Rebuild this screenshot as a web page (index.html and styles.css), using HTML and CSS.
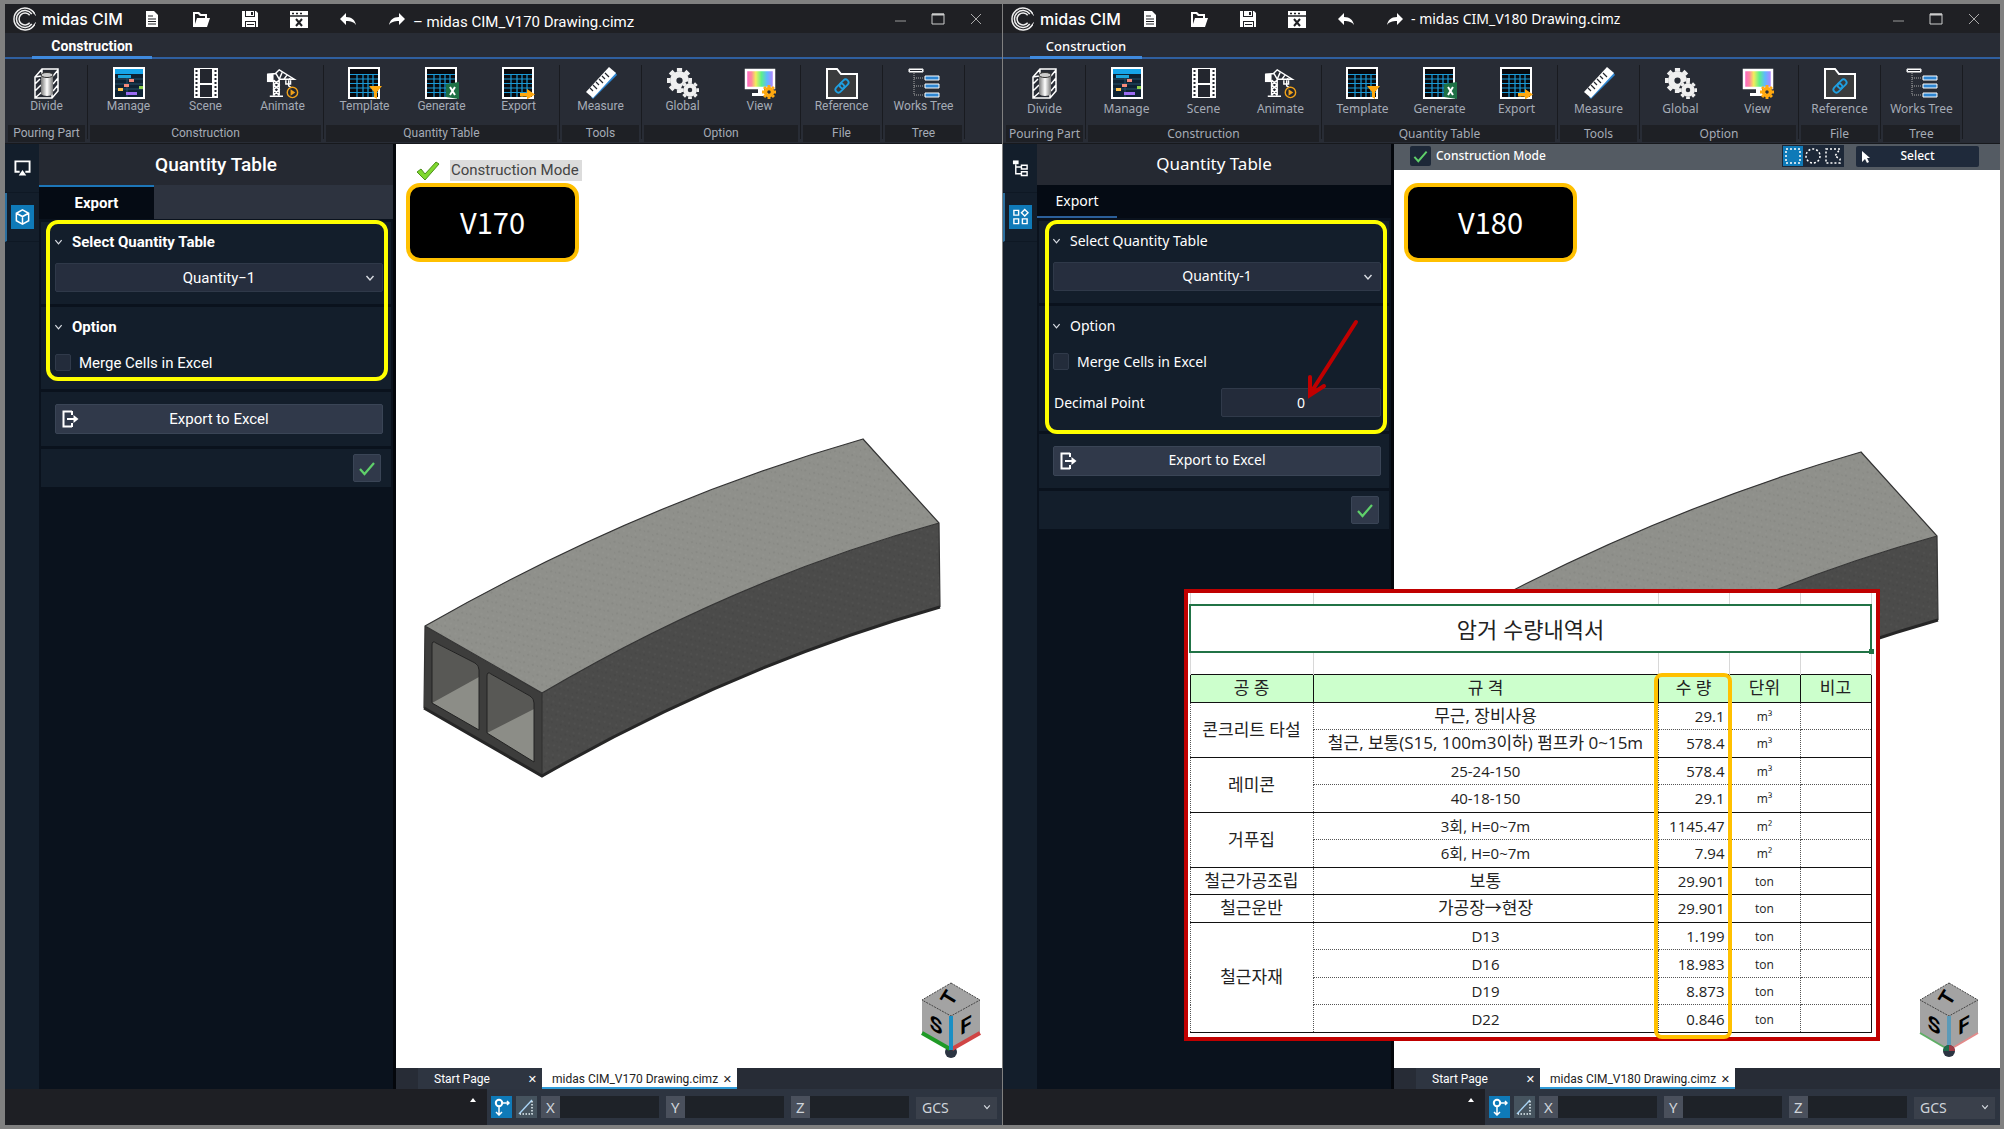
FILE: index.html
```html
<!DOCTYPE html>
<html lang="en">
<head>
  <meta charset="UTF-8" />
  <title>midas CIM V170 / V180</title>
  <meta name="viewport" content="width=device-width, initial-scale=1.0" />
  <link rel="stylesheet" href="styles.css">
</head>
<body>

  <!-- Shared icons -->
  <svg class="sprite" aria-hidden="true">
    <defs>
      <linearGradient id="rainbow">
        <stop offset="0" stop-color="#ff5fd0"/><stop offset=".2" stop-color="#ff8a9a"/><stop offset=".35" stop-color="#f2ee5a"/>
        <stop offset=".55" stop-color="#5cf08a"/><stop offset=".75" stop-color="#5fb8ff"/><stop offset="1" stop-color="#c07bff"/>
      </linearGradient>
      <linearGradient id="pipe">
        <stop offset="0" stop-color="#777"/><stop offset=".5" stop-color="#fff"/><stop offset="1" stop-color="#777"/>
      </linearGradient>
      <pattern id="grain" width="14" height="11" patternUnits="userSpaceOnUse" patternTransform="rotate(-25)">
        <path d="M2 3h2M9 8h2M6 6h1M12 2h1" stroke="#000" stroke-opacity=".09"/>
        <path d="M5 1h2M1 8h2M10 5h2" stroke="#fff" stroke-opacity=".05"/>
      </pattern>
    </defs>

    <symbol id="i-logo" viewBox="0 0 24 24">
      <g fill="none" stroke="#eee">
        <path d="M21.5 6.5A11 11 0 1 0 21.5 17.500" stroke-width="1.500"/>
        <path d="M18.800 7A8.500 8.500 0 1 0 18.800 17" stroke-width="1.500"/>
        <path d="M16.700 8.200A6 6 0 1 0 16.700 15.800" stroke-width="1.500"/>
        <path d="M19 3.500A11 11 0 0 1 22.500 8.500M19 20.500A11 11 0 0 0 22.500 15.500" stroke-width="1"/>
      </g>
    </symbol>
    <symbol id="i-new" viewBox="0 0 18 18">
      <path d="M3 1h8l4 4v12H3z" fill="#fff"/>
      <path d="M5 6h5M5 9h8M5 11.500h8M5 14h8" stroke="#1f2024" stroke-width="1.200"/>
    </symbol>
    <symbol id="i-open" viewBox="0 0 18 18">
      <path d="M1 17V2h6l2 2h6v4h-2V6H8L6 4H3v10l2-6h13l-3 9z" fill="#fff"/>
    </symbol>
    <symbol id="i-save" viewBox="0 0 18 18">
      <path d="M1 1h3v6h10V1h1l2 2v14h-2v-6H4v6H1z" fill="#fff"/>
      <path d="M5 1h8v5H5zM5 12h9v5H5z" fill="#fff"/>
      <path d="M10 2h2v3h-2zM6 14h7v1H6z" fill="#1f2024"/>
    </symbol>
    <symbol id="i-closefile" viewBox="0 0 18 18">
      <path d="M0 1h18v17H0z" fill="#fff"/>
      <path d="M0 6h18" stroke="#1f2024" stroke-width="1.500"/>
      <path d="M2 3.500h2M6 3.500h2M10 3.500h2" stroke="#1f2024" stroke-width="1.500"/>
      <path d="M6 9l6 7M12 9l-6 7" stroke="#1f2024" stroke-width="2"/>
    </symbol>
    <symbol id="i-undo" viewBox="0 0 18 18">
      <path d="M7 3v4c6 0 9 3 10 8-2-3-5-4-10-4v4L1 9z" fill="#fff"/>
    </symbol>
    <symbol id="i-redo" viewBox="0 0 18 18">
      <path d="M11 3v4C5 7 2 10 1 15c2-3 5-4 10-4v4l6-6z" fill="#fff"/>
    </symbol>

    <symbol id="i-divide" viewBox="0 0 32 32">
      <path d="M4 10L11 2h16v22l-6 7H4zM4 10l6-1M4 24l6-6M22 9l5-6M22 24l5-6M22 17l5-6M4 17l5-5M11 2v5M4 31l8-7M21 31V12" fill="none" stroke="#fff" stroke-width="1.500"/>
      <path d="M10 8v19c2 2.500 10 2.500 12 0V8z" fill="url(#pipe)"/>
      <ellipse cx="16" cy="8" rx="6" ry="2.500" fill="#ccc" stroke="#333"/>
    </symbol>
    <symbol id="i-manage" viewBox="0 0 32 32">
      <path d="M1 1h30v30H1z" fill="#0e2233" stroke="#fff" stroke-width="2"/>
      <path d="M2 2h28v5H2z" fill="#16a5ea"/>
      <path d="M2 12h28M2 17h28M2 22h28M14 8v22" stroke="#27506b"/>
      <path d="M5 8h13v3H5z" fill="#1ca4dc"/>
      <path d="M16 12h5v3h-5zM11 17h5v3h-5z" fill="#f58a7a"/>
      <path d="M5 21h5v3H5z" fill="#ffc24d"/><path d="M26 19h4v3h-4z" fill="#8bd14a"/><path d="M13 25h11v3H13z" fill="#9a6af0"/>
    </symbol>
    <symbol id="i-scene" viewBox="0 0 32 32">
      <path d="M4 1h24v30H4z" fill="#fff"/>
      <path d="M10 2h12v14H10zM10 18h12v12H10z" fill="#23262e"/>
      <path d="M6.500 3v28M25.500 3v28" stroke="#23262e" stroke-width="2" stroke-dasharray="2 2"/>
    </symbol>
    <symbol id="i-animate" viewBox="0 0 36 32">
      <path d="M2 7l8-1 4-4 16 10H14v17M8 13v16M4 30h14M14 12L10 5M17 5l-3 7M22 8l-3 4M26 11l-2 1M8 13l6 5-6 5 6 6M14 13l-6 5 6 5-6 6M24 13v6l3 2M21 13v4h5v-4" fill="none" stroke="#fff" stroke-width="1.500"/>
      <path d="M1 6h7v9H1z" fill="#fff"/>
      <circle cx="28" cy="26" r="5.500" fill="#23262e" stroke="#f0a21a" stroke-width="1.500"/><path d="M26 22.500l5 3.500-5 3.500z" fill="#f0a21a"/>
    </symbol>
    <symbol id="i-grid" viewBox="0 0 34 32">
      <path d="M1 1h30v30H1z" fill="#07090d" stroke="#fff" stroke-width="2"/>
      <path d="M2 7.500h28M2 12h28M2 16.500h28M2 21h28M2 25.500h28M9 7v23M15 7v23M20 7v23M25 7v23" stroke="#1b9ad6" stroke-width="1.200"/>
    </symbol>
    <symbol id="i-measure" viewBox="0 0 32 32">
      <path d="M8 32L32 8l-2-3L6 30z" fill="#2e86d2"/>
      <path d="M1 25L24 0l7 6L8 31z" fill="#fff"/>
      <path d="M5 21l3 3M8 18l4 4M11 15l3 3M14 12l4 4M17 9l3 3M20 6l4 4" stroke="#23262e" stroke-width="1.200"/>
    </symbol>
    <symbol id="i-gear" viewBox="-12 -12 24 24">
      <circle r="6" fill="none" stroke="currentColor" stroke-width="6"/>
      <path d="M0-8.500V-12M0 8.500V12M-8.500 0H-12M8.500 0H12M-6-6l-2.500-2.500M6 6l2.500 2.500M6-6l2.500-2.500M-6 6l-2.500 2.500" stroke="currentColor" stroke-width="5"/>
    </symbol>
    <symbol id="i-global" viewBox="0 0 32 32">
      <g color="#efefef">
        <use href="#i-gear" x="0" y="1" width="25" height="25"/>
        <circle cx="23" cy="23" r="9" fill="#282c35"/>
        <use href="#i-gear" x="14" y="14" width="18" height="18"/>
      </g>
    </symbol>
    <symbol id="i-view" viewBox="0 0 32 32">
      <path d="M2 3h28v18H2z" fill="url(#rainbow)" stroke="#fff" stroke-width="2.500"/>
      <path d="M14 22h6v4h4v3H8v-3h6z" fill="#fff"/>
      <g color="#ffa910"><use href="#i-gear" x="18" y="18" width="14" height="14"/></g>
    </symbol>
    <symbol id="i-reference" viewBox="0 0 32 32">
      <path d="M1 31V2h10l4 5h16v24z" fill="#3a3b3c" stroke="#fff" stroke-width="2"/>
      <g fill="none" stroke="#1f9fe0" stroke-width="1.800" transform="rotate(-45 16 19)">
        <rect x="8" y="16" width="10" height="6" rx="3"/><rect x="14" y="16" width="10" height="6" rx="3"/>
      </g>
    </symbol>
    <symbol id="i-tree" viewBox="0 0 32 32">
      <path d="M1 2h14v3H1zM17 9h14v4H17zM17 17h14v4H17zM17 26h14v4H17z" fill="#2e86d2" stroke="#fff"/>
      <path d="M1.500 2.500h13v2h-13z" fill="#23262e" stroke="#fff"/>
      <path d="M6 6v22h11M6 11h11M6 19h11" fill="none" stroke="#aaa" stroke-dasharray="1 1"/>
    </symbol>

    <symbol id="i-chev" viewBox="0 0 10 10"><path d="M1.500 3l3.500 4 3.500-4" fill="none" stroke="#d8dce2" stroke-width="1.400"/></symbol>
    <symbol id="i-check" viewBox="0 0 16 16"><path d="M1 9l4.500 5L15 3" fill="none" stroke="#5fd06a" stroke-width="2.200"/></symbol>
    <symbol id="i-exit" viewBox="0 0 18 18">
      <path d="M11 1.500H2.500v15H11M11 1v4M11 13v4" fill="none" stroke="#fff" stroke-width="2"/>
      <path d="M6 9h8" stroke="#fff" stroke-width="2"/><path d="M12.500 5l5 4-5 4z" fill="#fff"/>
    </symbol>
    <symbol id="i-snap" viewBox="0 0 18 18">
      <circle cx="7" cy="5" r="3.200" fill="none" stroke="#fff" stroke-width="2"/>
      <path d="M7 8v9M11 5h6M15 3l2 2-2 2M4 14l3 3 3-3" fill="none" stroke="#fff" stroke-width="1.500"/>
    </symbol>
    <symbol id="i-angle" viewBox="0 0 18 18">
      <path d="M2 16L15 2" stroke="#a9d4f5" stroke-width="1.400"/><path d="M15 3v13H3" fill="none" stroke="#e6f2f8" stroke-width="1.500" stroke-dasharray="1.500 1.500"/>
    </symbol>

    <symbol id="i-model" viewBox="0 0 560 380">
      <path d="M25 206Q240 83 463 19L539 103Q335 159 142 273z" fill="#8f908b"/>
      <path d="M142 273Q335 159 539 103L540 187Q336 245 142 357z" fill="#4b4b4a"/>
      <path d="M25 206L142 273V357L24 288z" fill="#3d3d3c"/>
      <path d="M32 225q0-5 4-2l39 20q4 2 4 7v60L32 283z" fill="#8c8d87"/>
      <path d="M32 225q0-5 4-2l39 20q4 2 4 7v7L32 283z" fill="#585855"/>
      <path d="M87 256q0-5 4-2l39 22q4 2 4 7v59L87 313z" fill="#8c8d87"/>
      <path d="M87 256q0-5 4-2l39 22q4 2 4 7v6L87 313z" fill="#585855"/>
      <path d="M32 225q0-5 4-2l39 20q4 2 4 7v60L32 283zM87 256q0-5 4-2l39 22q4 2 4 7v59L87 313z" fill="none" stroke="#222"/>
      <path d="M25 206Q240 83 463 19L539 103L540 187Q336 245 142 357V273z" fill="url(#grain)"/>
      <path d="M24 288L25 206Q240 83 463 19L539 103L540 187M25 206L142 273Q335 159 539 103M142 273V357" fill="none" stroke="#333" stroke-width="1.200"/>
      <path d="M24 288L142 356Q336 245 540 187" fill="none" stroke="#262626" stroke-width="3"/>
    </symbol>
    <symbol id="i-cubeface" viewBox="0 0 60 76">
      <path d="M30 1L59 18V51L30 68L1 51V18z" fill="#a3a3a3"/>
      <path d="M30 1L59 18L30 34L1 18z" fill="none" stroke="#444" stroke-dasharray="2 1"/>
    </symbol>
  </svg>

  <div class="desktop">

    <!-- V170 -->
    <main class="win win-v170">
      <header class="titlebar">
        <svg class="logo"><use href="#i-logo"/></svg>
        <span class="brand">midas CIM</span>
        <nav class="quick">
          <button aria-label="New"><svg><use href="#i-new"/></svg></button>
          <button aria-label="Open"><svg><use href="#i-open"/></svg></button>
          <button aria-label="Save"><svg><use href="#i-save"/></svg></button>
          <button aria-label="Close file"><svg><use href="#i-closefile"/></svg></button>
          <button aria-label="Undo"><svg><use href="#i-undo"/></svg></button>
          <button aria-label="Redo"><svg><use href="#i-redo"/></svg></button>
        </nav>
        <span class="doc-title">– midas CIM_V170 Drawing.cimz</span>
        <div class="win-btns">
          <button aria-label="Minimize"><svg viewBox="0 0 14 14"><path d="M2 9h11" stroke="#999"/></svg></button>
          <button aria-label="Maximize"><svg viewBox="0 0 14 14"><path d="M1 2h12v10H1z" fill="none" stroke="#ccc"/><path d="M1 2.500h12" stroke="#ccc" stroke-width="2"/></svg></button>
          <button aria-label="Close"><svg viewBox="0 0 14 14"><path d="M2 2l10 10M12 2L2 12" stroke="#aaa"/></svg></button>
        </div>
      </header>
      <div class="menu-tabs"><button class="menu-tab">Construction</button></div>

      <div class="ribbon">
        <div class="group">
          <div class="tools"><button><svg><use href="#i-divide"/></svg>Divide</button></div>
          <span class="group-name">Pouring Part</span>
        </div>
        <div class="group">
          <div class="tools">
            <button><svg><use href="#i-manage"/></svg>Manage</button>
            <button><svg><use href="#i-scene"/></svg>Scene</button>
            <button><svg class="wide"><use href="#i-animate"/></svg>Animate</button>
          </div>
          <span class="group-name">Construction</span>
        </div>
        <div class="group">
          <div class="tools">
            <button><svg viewBox="0 0 34 32" class="wide"><use href="#i-grid"/><path d="M21 19h13l-5 6v7l-3-2v-5z" fill="#ffa910"/></svg>Template</button>
            <button><svg viewBox="0 0 34 32" class="wide"><use href="#i-grid"/><path d="M21 17l13-2v17l-13-2z" fill="#1e7145"/><path d="M25 20l5 8M30 20l-5 8" stroke="#fff" stroke-width="2"/></svg>Generate</button>
            <button><svg viewBox="0 0 34 32" class="wide"><use href="#i-grid"/><path d="M18 26h7v-4l8 5.500-8 5v-3h-7z" fill="#ffa910"/></svg>Export</button>
          </div>
          <span class="group-name">Quantity Table</span>
        </div>
        <div class="group">
          <div class="tools"><button><svg><use href="#i-measure"/></svg>Measure</button></div>
          <span class="group-name">Tools</span>
        </div>
        <div class="group">
          <div class="tools">
            <button><svg><use href="#i-global"/></svg>Global</button>
            <button><svg><use href="#i-view"/></svg>View</button>
          </div>
          <span class="group-name">Option</span>
        </div>
        <div class="group">
          <div class="tools"><button><svg><use href="#i-reference"/></svg>Reference</button></div>
          <span class="group-name">File</span>
        </div>
        <div class="group">
          <div class="tools"><button><svg><use href="#i-tree"/></svg>Works Tree</button></div>
          <span class="group-name">Tree</span>
        </div>
      </div>

      <div class="work">
        <nav class="rail">
          <button aria-label="Display"><svg viewBox="0 0 18 18"><path d="M6 13H1.500V2h15v11H12" fill="none" stroke="#fff" stroke-width="2"/><path d="M9 11l4 6H5z" fill="#fff"/></svg></button>
          <button class="on" aria-label="Model"><svg viewBox="0 0 18 18"><path d="M9 1.500l6.500 3.500v8L9 16.500 2.500 13V5zM2.500 5L9 8.500 15.500 5M9 8.500v8" fill="none" stroke="#fff" stroke-width="1.600"/></svg></button>
        </nav>
        <aside class="panel">
          <h2 class="panel-title">Quantity Table</h2>
          <div class="panel-tabs"><button class="panel-tab">Export</button></div>
          <div class="panel-body">
            <div class="marked">
              <section>
                <h3><svg><use href="#i-chev"/></svg>Select Quantity Table</h3>
                <div class="select">
                  <select aria-label="Quantity table"><option>Quantity−1</option></select>
                  <svg><use href="#i-chev"/></svg>
                </div>
              </section>
              <section>
                <h3><svg><use href="#i-chev"/></svg>Option</h3>
                <label class="check"><input type="checkbox">Merge Cells in Excel</label>
              </section>
            </div>
            <section><button class="export-btn"><svg><use href="#i-exit"/></svg>Export to Excel</button></section>
            <section class="apply"><button class="ok-btn" aria-label="Apply"><svg><use href="#i-check"/></svg></button></section>
          </div>
        </aside>
        <div class="view">
          <div class="canvas">
            <div class="mode">
              <svg viewBox="0 0 24 20"><path d="M1 11l4-3 4 5L20 1l3 2L9 19z" fill="#7fd82e" stroke="#4c8f1c"/></svg>
              <span>Construction Mode</span>
            </div>
            <div class="version">V170</div>
            <svg class="model"><use href="#i-model"/></svg>
            <svg class="cube" viewBox="0 0 60 76">
              <use href="#i-cubeface"/>
              <circle cx="30" cy="70" r="6" fill="#2b3442"/>
              <path d="M1 51L29 67" stroke="#1f9a26" stroke-width="4"/><path d="M59 51L31 67" stroke="#d04545" stroke-width="4"/><path d="M30 34v34" stroke="#1b8fc4" stroke-width="4"/>
              <text x="0" y="7" transform="translate(28 16) rotate(-58)" text-anchor="middle">T</text>
              <text x="0" y="7" transform="translate(15 43) skewY(30)" text-anchor="middle">S</text>
              <text x="0" y="7" transform="translate(45 43) skewY(-30)" text-anchor="middle">F</text>
            </svg>
          </div>
          <div class="file-tabs">
            <button class="file-tab">Start Page<span>✕</span></button>
            <button class="file-tab open">midas CIM_V170 Drawing.cimz<span>✕</span></button>
          </div>
        </div>
      </div>

      <footer class="status">
        <div class="log"><svg viewBox="0 0 8 6"><path d="M4 1l3 4H1z" fill="#fff"/></svg></div>
        <div class="coords">
          <button class="toggle on" aria-label="Snap"><svg><use href="#i-snap"/></svg></button>
          <button class="toggle" aria-label="Angle"><svg><use href="#i-angle"/></svg></button>
          <label>X<input type="text"></label>
          <label>Y<input type="text"></label>
          <label>Z<input type="text"></label>
          <div class="gcs"><select aria-label="Coordinate system"><option>GCS</option></select><svg><use href="#i-chev"/></svg></div>
        </div>
      </footer>
    </main>

    <!-- V180 -->
    <section class="win win-v180">
      <header class="titlebar">
        <svg class="logo"><use href="#i-logo"/></svg>
        <span class="brand">midas CIM</span>
        <nav class="quick">
          <button aria-label="New"><svg><use href="#i-new"/></svg></button>
          <button aria-label="Open"><svg><use href="#i-open"/></svg></button>
          <button aria-label="Save"><svg><use href="#i-save"/></svg></button>
          <button aria-label="Close file"><svg><use href="#i-closefile"/></svg></button>
          <button aria-label="Undo"><svg><use href="#i-undo"/></svg></button>
          <button aria-label="Redo"><svg><use href="#i-redo"/></svg></button>
        </nav>
        <span class="doc-title">- midas CIM_V180 Drawing.cimz</span>
        <div class="win-btns">
          <button aria-label="Minimize"><svg viewBox="0 0 14 14"><path d="M2 9h11" stroke="#999"/></svg></button>
          <button aria-label="Maximize"><svg viewBox="0 0 14 14"><path d="M1 2h12v10H1z" fill="none" stroke="#ccc"/><path d="M1 2.500h12" stroke="#ccc" stroke-width="2"/></svg></button>
          <button aria-label="Close"><svg viewBox="0 0 14 14"><path d="M2 2l10 10M12 2L2 12" stroke="#aaa"/></svg></button>
        </div>
      </header>
      <div class="menu-tabs"><button class="menu-tab">Construction</button></div>

      <div class="ribbon">
        <div class="group">
          <div class="tools"><button><svg><use href="#i-divide"/></svg>Divide</button></div>
          <span class="group-name">Pouring Part</span>
        </div>
        <div class="group">
          <div class="tools">
            <button><svg><use href="#i-manage"/></svg>Manage</button>
            <button><svg><use href="#i-scene"/></svg>Scene</button>
            <button><svg class="wide"><use href="#i-animate"/></svg>Animate</button>
          </div>
          <span class="group-name">Construction</span>
        </div>
        <div class="group">
          <div class="tools">
            <button><svg viewBox="0 0 34 32" class="wide"><use href="#i-grid"/><path d="M21 19h13l-5 6v7l-3-2v-5z" fill="#ffa910"/></svg>Template</button>
            <button><svg viewBox="0 0 34 32" class="wide"><use href="#i-grid"/><path d="M21 17l13-2v17l-13-2z" fill="#1e7145"/><path d="M25 20l5 8M30 20l-5 8" stroke="#fff" stroke-width="2"/></svg>Generate</button>
            <button><svg viewBox="0 0 34 32" class="wide"><use href="#i-grid"/><path d="M18 26h7v-4l8 5.500-8 5v-3h-7z" fill="#ffa910"/></svg>Export</button>
          </div>
          <span class="group-name">Quantity Table</span>
        </div>
        <div class="group">
          <div class="tools"><button><svg><use href="#i-measure"/></svg>Measure</button></div>
          <span class="group-name">Tools</span>
        </div>
        <div class="group">
          <div class="tools">
            <button><svg><use href="#i-global"/></svg>Global</button>
            <button><svg><use href="#i-view"/></svg>View</button>
          </div>
          <span class="group-name">Option</span>
        </div>
        <div class="group">
          <div class="tools"><button><svg><use href="#i-reference"/></svg>Reference</button></div>
          <span class="group-name">File</span>
        </div>
        <div class="group">
          <div class="tools"><button><svg><use href="#i-tree"/></svg>Works Tree</button></div>
          <span class="group-name">Tree</span>
        </div>
      </div>

      <div class="work">
        <nav class="rail">
          <button aria-label="Tree"><svg viewBox="0 0 18 18"><path d="M1 1h6v4H1z" fill="#fff"/><path d="M4 5v10h6M4 8h6M10 6h6v4h-6zM10 13h6v4h-6z" fill="none" stroke="#fff" stroke-width="1.500"/></svg></button>
          <button class="on" aria-label="Components"><svg viewBox="0 0 18 18"><path d="M2 2h5v5H2zM2 11h5v5H2zM11 11h5v5h-5zM13.500 1l3.500 3.500L13.500 8 10 4.500z" fill="none" stroke="#fff" stroke-width="1.500"/></svg></button>
        </nav>
        <aside class="panel">
          <h2 class="panel-title">Quantity Table</h2>
          <div class="panel-tabs"><button class="panel-tab">Export</button></div>
          <div class="panel-body">
            <div class="marked">
              <section>
                <h3><svg><use href="#i-chev"/></svg>Select Quantity Table</h3>
                <div class="select">
                  <select aria-label="Quantity table"><option>Quantity-1</option></select>
                  <svg><use href="#i-chev"/></svg>
                </div>
              </section>
              <section>
                <h3><svg><use href="#i-chev"/></svg>Option</h3>
                <label class="check"><input type="checkbox">Merge Cells in Excel</label>
                <div class="decimal">
                  <label for="decimal">Decimal Point</label>
                  <input type="text" id="decimal" value="0">
                </div>
              </section>
              <svg class="arrow" viewBox="0 0 56 82"><path d="M51 4L5 76M5 59V77L19 68" fill="none" stroke="#c00000" stroke-width="4" stroke-linecap="round"/></svg>
            </div>
            <section><button class="export-btn"><svg><use href="#i-exit"/></svg>Export to Excel</button></section>
            <section class="apply"><button class="ok-btn" aria-label="Apply"><svg><use href="#i-check"/></svg></button></section>
          </div>
        </aside>
        <div class="view">
          <div class="view-bar">
            <label class="mode-check"><input type="checkbox" checked><svg><use href="#i-check"/></svg>Construction Mode</label>
            <div class="shapes">
              <button class="on" aria-label="Box"><svg viewBox="0 0 18 18"><path d="M2 2h14v14H2z" fill="none" stroke="#fff" stroke-width="1.500" stroke-dasharray="2 2"/></svg></button>
              <button aria-label="Circle"><svg viewBox="0 0 18 18"><circle cx="9" cy="9" r="7" fill="none" stroke="#fff" stroke-width="1.500" stroke-dasharray="2 2"/></svg></button>
              <button aria-label="Polygon"><svg viewBox="0 0 18 18"><path d="M2 2h14l-5 7 5 3v4H2z" fill="none" stroke="#fff" stroke-width="1.500" stroke-dasharray="2 2"/></svg></button>
            </div>
            <button class="pick"><svg viewBox="0 0 10 14"><path d="M1 1l8 7H6l2 4-2 1-2-4-3 3z" fill="#fff"/></svg>Select</button>
          </div>
          <div class="canvas">
            <div class="version">V180</div>
            <svg class="model"><use href="#i-model"/></svg>
            <svg class="cube" viewBox="0 0 60 76">
              <use href="#i-cubeface"/>
              <path d="M1 51L30 68" stroke="#5fae66" stroke-width="2"/><path d="M59 51L30 68" stroke="#e28a8a" stroke-width="2"/><path d="M30 34v34" stroke="#5b9ab8" stroke-width="4"/>
              <circle cx="30" cy="69" r="6" fill="#2b3442"/><path d="M30 69V63a6 6 0 0 0-6 6z" fill="#1f6b4a"/><path d="M30 69V63a6 6 0 0 1 6 6z" fill="#a03b45"/>
              <text x="0" y="7" transform="translate(28 16) rotate(-58)" text-anchor="middle">T</text>
              <text x="0" y="7" transform="translate(15 43) skewY(30)" text-anchor="middle">S</text>
              <text x="0" y="7" transform="translate(45 43) skewY(-30)" text-anchor="middle">F</text>
            </svg>
          </div>
          <div class="file-tabs">
            <button class="file-tab">Start Page<span>✕</span></button>
            <button class="file-tab open">midas CIM_V180 Drawing.cimz<span>✕</span></button>
          </div>
        </div>
      </div>

      <footer class="status">
        <div class="log"><svg viewBox="0 0 8 6"><path d="M4 1l3 4H1z" fill="#fff"/></svg></div>
        <div class="coords">
          <button class="toggle on" aria-label="Snap"><svg><use href="#i-snap"/></svg></button>
          <button class="toggle" aria-label="Angle"><svg><use href="#i-angle"/></svg></button>
          <label>X<input type="text"></label>
          <label>Y<input type="text"></label>
          <label>Z<input type="text"></label>
          <div class="gcs"><select aria-label="Coordinate system"><option>GCS</option></select><svg><use href="#i-chev"/></svg></div>
        </div>
      </footer>

      <!-- Exported sheet, floats over the window -->
      <div class="sheet" lang="ko">
        <table>
          <colgroup><col class="c-kind"><col><col class="c-num"><col class="c-num"><col class="c-num"></colgroup>
          <thead>
            <tr class="blank top"><td></td><td></td><td></td><td></td><td></td></tr>
            <tr class="caption"><th colspan="5">암거 수량내역서</th></tr>
            <tr class="blank"><td></td><td></td><td></td><td></td><td></td></tr>
            <tr class="head"><th>공 종</th><th>규 격</th><th>수 량</th><th>단위</th><th>비고</th></tr>
          </thead>
          <tbody>
            <tr class="first"><td rowspan="2">콘크리트 타설</td><td>무근, 장비사용</td><td class="num">29.1</td><td class="unit">m³</td><td></td></tr>
            <tr><td>철근, 보통(S15, 100m3이하) 펌프카 0~15m</td><td class="num">578.4</td><td class="unit">m³</td><td></td></tr>
            <tr class="first"><td rowspan="2">레미콘</td><td class="latin">25-24-150</td><td class="num">578.4</td><td class="unit">m³</td><td></td></tr>
            <tr><td class="latin">40-18-150</td><td class="num">29.1</td><td class="unit">m³</td><td></td></tr>
            <tr class="first"><td rowspan="2">거푸집</td><td class="latin">3회, H=0~7m</td><td class="num">1145.47</td><td class="unit">m²</td><td></td></tr>
            <tr><td class="latin">6회, H=0~7m</td><td class="num">7.94</td><td class="unit">m²</td><td></td></tr>
            <tr class="first"><td>철근가공조립</td><td>보통</td><td class="num">29.901</td><td class="unit">ton</td><td></td></tr>
            <tr class="first"><td>철근운반</td><td>가공장→현장</td><td class="num">29.901</td><td class="unit">ton</td><td></td></tr>
            <tr class="first"><td rowspan="4">철근자재</td><td class="latin">D13</td><td class="num">1.199</td><td class="unit">ton</td><td></td></tr>
            <tr><td class="latin">D16</td><td class="num">18.983</td><td class="unit">ton</td><td></td></tr>
            <tr><td class="latin">D19</td><td class="num">8.873</td><td class="unit">ton</td><td></td></tr>
            <tr><td class="latin">D22</td><td class="num">0.846</td><td class="unit">ton</td><td></td></tr>
          </tbody>
        </table>
        <div class="column-mark"></div>
        <i class="fill-handle"></i>
      </div>
    </section>
  </div>

</body>
</html>
```
FILE: styles.css
```css
* { box-sizing: border-box; margin: 0; padding: 0; }
html, body { height: 100%; }
body {
  background: #808080;
  color: #fff;
}
button, input, select {
  font: inherit;
  color: inherit;
  background: none;
  border: 0;
}
svg { display: block; flex: none; }
.sprite { position: absolute; width: 0; height: 0; }

.desktop {
  display: grid;
  grid-template-columns: 1fr 1fr;
  gap: 1px;
  min-height: 100%;
  padding: 4px 4px 4px 5px;
}
.win {
  position: relative;
  display: flex;
  flex-direction: column;
  min-width: 0;
  background: #0a121d;
}
.win-v170 { font: 15px/20px Roboto, "Liberation Sans", sans-serif; }
.win-v180 { font: 14px/20px "Noto Sans", "Open Sans", sans-serif; }

/* TITLE BAR */
.titlebar {
  display: flex;
  align-items: center;
  height: 29px;
  padding: 0 19px 0 8px;
  background: #1f2024;
}
.logo { width: 24px; height: 24px; }
.brand {
  width: 94px;
  margin-left: 5px;
  font: 500 16px/20px Inter, sans-serif;
}
.quick {
  display: flex;
  gap: 31px;
  margin-left: 7px;
}
.quick button, .quick svg { width: 18px; height: 18px; }
.doc-title {
  margin-left: 7px;
  white-space: nowrap;
}
.win-v170 .doc-title { padding-top: 6px; }
.win-btns {
  display: flex;
  gap: 24px;
  margin-left: auto;
}
.win-btns button, .win-btns svg { width: 14px; height: 14px; }

.menu-tabs {
  display: flex;
  height: 26px;
  padding-left: 27px;
  background: #282c35;
  border-bottom: 2px solid #2f5f9f;
}
.menu-tab {
  width: 120px;
  height: 26px;
  padding-top: 3px;
  border-bottom: 3px solid #3f8ade;
}
.win-v170 .menu-tab { font-weight: 700; font-size: 14px; }
.win-v180 .menu-tab { width: 112px; font-weight: 500; font-size: 13px; }

/* RIBBON */
.ribbon {
  display: flex;
  gap: 5px;
  height: 85px;
  padding: 6px 3px 1px;
  background: #282c35;
  border-bottom: 1px solid #17191d;
  color: #a5abb5;
}
.group {
  position: relative;
  display: flex;
  flex-direction: column;
  justify-content: space-between;
}
.group::after {
  content: "";
  position: absolute;
  top: 0;
  right: -3px;
  width: 1px;
  height: 74px;
  background: #191b20;
}
.tools { display: flex; }
.tools button {
  display: flex;
  flex-direction: column;
  align-items: center;
  width: 77px;
  padding-top: 2px;
  font-size: 12px;
  line-height: 15px;
  white-space: nowrap;
}
.tools svg { width: 32px; height: 32px; }
.tools svg.wide { width: 34px; }
.win-v180 .tools svg { margin-bottom: 2px; }
.group-name {
  background: #1e2025;
  font-size: 12px;
  line-height: 17px;
  text-align: center;
}

/* SIDE RAIL AND PANEL */
.work {
  display: flex;
  flex: 1;
}
.rail {
  width: 34px;
  background: #131e2b;
}
.rail button {
  display: flex;
  align-items: center;
  justify-content: center;
  width: 34px;
  height: 49px;
  border-bottom: 1px solid #0e1824;
}
.rail svg { width: 23px; height: 24px; padding: 3px; }
.rail .on {
  padding-right: 2px;
  border-left: 2px solid #2b6f9f;
}
.rail .on svg { background: #0f7ab8; }

.panel {
  width: 357px;
  background: #0a121d;
  border-right: 3px solid #04070c;
}
.panel-title {
  background: #252932;
  font-size: 19px;
  font-weight: 500;
  line-height: 41px;
  text-align: center;
}
.win-v180 .panel-title {
  padding-bottom: 2px;
  font-size: 17px;
  font-weight: 400;
  line-height: 39px;
}
.panel-tabs {
  display: flex;
  height: 34px;
  background: #2d333f;
}
.panel-tab {
  width: 115px;
  background: #050b14;
  border-top: 2px solid #1d76b8;
  font-weight: 700;
}
.win-v180 .panel-tabs { height: 33px; background: #050b14; }
.win-v180 .panel-tab {
  width: 80px;
  border-top: 0;
  border-bottom: 2px solid #2b5f9a;
  font-weight: 400;
}
.panel-body, .marked {
  display: flex;
  flex-direction: column;
  gap: 3px;
}
.panel-body { padding: 3px 2px; }
.panel-body section {
  padding: 10px 8px 12px 14px;
  background: #131e2b;
}
.panel-body > section { padding-top: 12px; }
.panel-body > .apply { padding: 5px 10px; }
.panel h3 {
  display: flex;
  align-items: center;
  gap: 9px;
  margin-left: -1px;
  font-size: 15px;
  font-weight: 700;
}
.win-v180 h3 { font-size: 14px; font-weight: 400; }
.panel h3 svg { width: 9px; height: 10px; }
.select {
  position: relative;
  margin-top: 11px;
}
.select select {
  width: 100%;
  height: 29px;
  background: #262e3e;
  border: 1px solid #2f3949;
  border-radius: 2px;
  appearance: none;
  text-align: center;
  text-align-last: center;
}
.win-v180 .select select,
.win-v180 .export-btn,
.win-v180 .decimal { padding-bottom: 2px; }
.select svg {
  position: absolute;
  top: 10px;
  right: 8px;
  width: 10px;
  height: 10px;
}
.check {
  display: flex;
  align-items: center;
  gap: 8px;
  height: 29px;
  margin-top: 11px;
}
.check input {
  width: 16px;
  height: 17px;
  background: #232c3b;
  border: 1px solid #303a4a;
  border-radius: 2px;
  appearance: none;
}
.decimal {
  display: flex;
  align-items: center;
  justify-content: space-between;
  margin-top: 12px;
  padding-left: 1px;
}
.decimal input {
  width: 160px;
  height: 29px;
  background: #232b3a;
  border: 1px solid #303a4a;
  border-radius: 2px;
  text-align: center;
}
.export-btn {
  position: relative;
  width: 100%;
  height: 30px;
  background: #30394a;
  border: 1px solid #3a4556;
  border-radius: 2px;
}
.export-btn svg {
  position: absolute;
  top: 5px;
  left: 5px;
  width: 18px;
  height: 18px;
}
.apply { display: flex; justify-content: flex-end; }
.ok-btn {
  display: flex;
  align-items: center;
  justify-content: center;
  width: 28px;
  height: 28px;
  background: #30394a;
  border: 1px solid #3a4556;
  border-radius: 2px;
}
.ok-btn svg { width: 16px; height: 16px; }

/* yellow callout drawn over the sections */
.marked { position: relative; }
.marked::after {
  content: "";
  position: absolute;
  inset: -2px 3px 8px 5px;
  border: 4px solid #ff0;
  border-radius: 12px;
  pointer-events: none;
}
.win-v180 .marked::after { inset: -1px 2px -3px 6px; }
.arrow {
  position: absolute;
  top: 97px;
  right: 28px;
  width: 56px;
  height: 82px;
}

/* VIEWPORT */
.view {
  display: flex;
  flex: 1;
  flex-direction: column;
  min-width: 0;
}
.view-bar {
  display: flex;
  align-items: center;
  height: 26px;
  padding: 0 21px 2px 16px;
  background: #545b63;
}
.mode-check {
  position: relative;
  display: flex;
  align-items: center;
  gap: 5px;
  margin-right: auto;
  font-size: 12px;
  font-weight: 500;
}
.mode-check input {
  width: 21px;
  height: 20px;
  background: #1d2838;
  border-radius: 2px;
  appearance: none;
}
.mode-check svg {
  position: absolute;
  top: 3px;
  left: 3px;
  width: 15px;
  height: 14px;
}
.shapes {
  display: flex;
  padding: 1px;
  background: #1d2838;
}
.shapes button { width: 20px; height: 20px; padding: 1px; }
.shapes svg { width: 18px; height: 18px; }
.shapes .on { background: #0f7ab8; }
.pick {
  position: relative;
  width: 123px;
  height: 21px;
  margin-left: 12px;
  background: #1f2a3b;
  border-radius: 2px;
  font-size: 12px;
  font-weight: 500;
}
.pick svg {
  position: absolute;
  top: 4px;
  left: 5px;
  width: 10px;
  height: 14px;
}
.canvas {
  position: relative;
  flex: 1;
  padding: 16px 10px;
  background: #fff;
  overflow: hidden;
}
.win-v180 .canvas { padding-top: 13px; }
.mode {
  display: flex;
  align-items: center;
  gap: 10px;
  margin-left: 10px;
}
.mode svg { width: 24px; height: 20px; }
.mode span {
  padding: 0 3px 0 1px;
  background: #dcdcdc;
  color: #444;
  line-height: 21px;
}
.version {
  width: 173px;
  height: 79px;
  margin-top: 2px;
  background: #000;
  border: 4px solid #ffc000;
  border-radius: 14px;
  font: 29px/68px "Noto Sans CJK KR", sans-serif;
  text-align: center;
}
.win-v180 .version { margin-top: 0; }
.model {
  position: absolute;
  top: 276px;
  left: 4px;
  width: 560px;
  height: 380px;
}
.win-v180 .model { top: 263px; }
.cube {
  position: absolute;
  right: 21px;
  bottom: 10px;
  width: 60px;
  height: 76px;
}
.cube text {
  fill: #000;
  font: 700 20px Inter, sans-serif;
}

.file-tabs {
  display: flex;
  height: 21px;
  padding-left: 22px;
  background: #272c36;
  font: 12px/17px Roboto, sans-serif;
}
.file-tab {
  display: flex;
  justify-content: space-between;
  width: 124px;
  padding: 3px 5px 0 16px;
  background: #2e3541;
  white-space: nowrap;
}
.file-tab span { font-family: "DejaVu Sans", sans-serif; font-size: 11px; }
.file-tab.open {
  width: 195px;
  padding-left: 10px;
  background: #fff;
  border-bottom: 2px solid #2f9bd8;
  color: #222;
}

/* STATUS BAR */
.status {
  display: flex;
  height: 36px;
  background: #2d3440;
  font: 15px/22px "Noto Sans", sans-serif;
}
.log {
  flex: none;
  width: 482px;
  padding: 8px 10px;
  background: #1e1f24;
}
.log svg { width: 8px; height: 6px; margin-left: auto; }
.coords {
  display: flex;
  flex: 1;
  align-items: center;
  gap: 7px;
  min-width: 0;
  padding: 0 5px 0 4px;
  color: #cfd4da;
}
.toggle {
  flex: none;
  width: 21px;
  height: 22px;
  margin-right: -3px;
  padding: 2px 1px;
  background: #46545f;
}
.toggle svg { width: 18px; height: 18px; }
.toggle.on { background: #0f7ab8; }
.coords label {
  display: flex;
  flex: 1;
  min-width: 0;
  background: #4a505c;
  text-indent: 5px;
}
.coords input {
  flex: 1;
  min-width: 0;
  height: 22px;
  margin-left: 5px;
  background: #1e2228;
}
.gcs { position: relative; }
.gcs select {
  width: 81px;
  height: 22px;
  padding-left: 6px;
  background: #3a404b;
  appearance: none;
  font-size: 14px;
}
.gcs svg {
  position: absolute;
  top: 7px;
  right: 6px;
  width: 8px;
  height: 8px;
}

/* EXPORTED SHEET */
.sheet {
  position: absolute;
  top: 585px;
  right: 120px;
  width: 696px;
  height: 452px;
  padding: 0 4px 0 1px;
  background: #fff;
  border: 4px solid #c00000;
  color: #222;
  font: 17px/20px "Open Sans", "Noto Sans CJK KR", sans-serif;
}
.sheet table {
  width: 100%;
  height: 440px;
  border-collapse: collapse;
  table-layout: fixed;
}
.c-kind { width: 123px; }
.c-num { width: 71px; }
.sheet th { font-weight: 400; }
.sheet td, .head th {
  border: 1px dotted #555;
  text-align: center;
  white-space: nowrap;
}
.sheet .blank td {
  height: 22px;
  border: 0;
  border-left: 1px solid #d8d8d8;
  border-right: 1px solid #d8d8d8;
}
.sheet .blank.top td { height: 12px; }
.caption th {
  height: 47px;
  border: 2px solid #217346;
  font-size: 22px;
  line-height: 30px;
}
.head th {
  height: 28px;
  background: #ccffcc;
  border: 1px solid #111;
}
.sheet .first td { border-top: 1px solid #111; }
.sheet tbody td[rowspan] { border-bottom: 1px solid #111; }
.sheet tbody td:last-child { border-right: 1px solid #111; }
.sheet tbody tr:last-child td { border-bottom: 1px solid #111; }
.sheet td.latin { font-size: 15px; }
.sheet td.num {
  padding-right: 4px;
  font-size: 15px;
  text-align: right;
}
.sheet td.unit { padding-top: 2px; font-size: 12px; }
.column-mark {
  position: absolute;
  top: 80px;
  right: 144px;
  width: 78px;
  height: 366px;
  border: 4px solid #ffc000;
  border-radius: 8px;
}
.fill-handle {
  position: absolute;
  top: 56px;
  right: 2px;
  width: 5px;
  height: 5px;
  background: #217346;
}
```
